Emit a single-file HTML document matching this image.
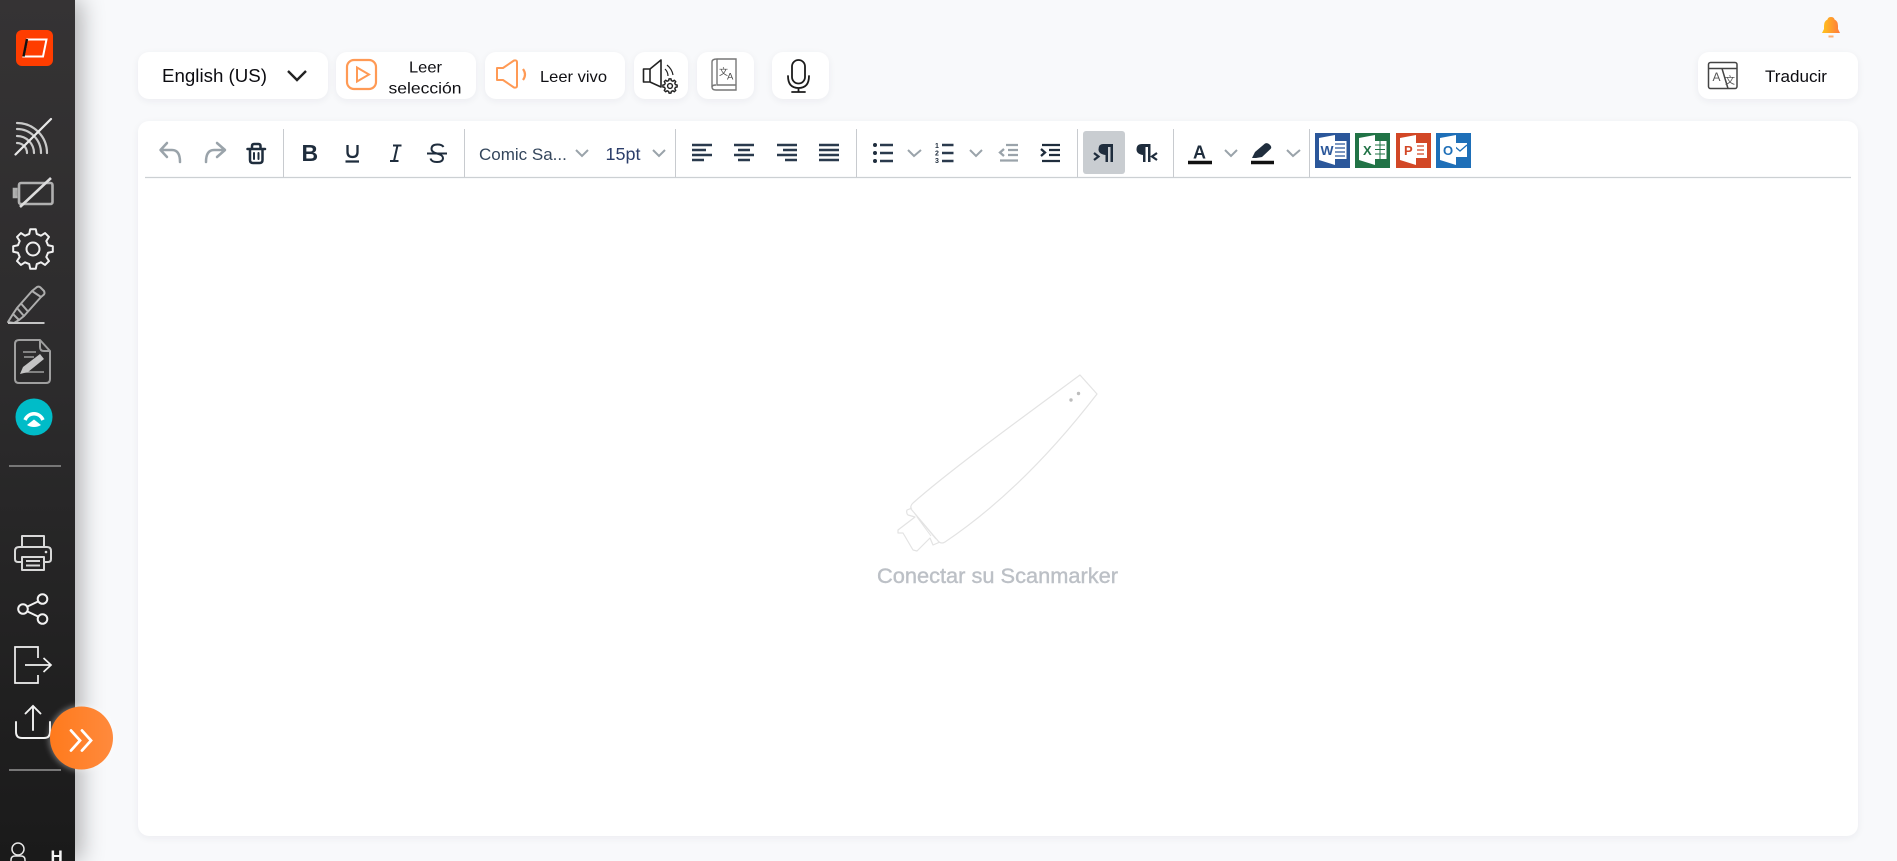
<!DOCTYPE html>
<html lang="es"><head><meta charset="utf-8"><title>Scanmarker</title>
<style>
html,body{margin:0;padding:0;width:1897px;height:861px;overflow:hidden;background:#f8f9fb;font-family:"Liberation Sans",sans-serif}
.side{position:absolute;left:0;top:0;width:75px;height:861px;background:linear-gradient(180deg,#353334 0%,#2c2b2c 45%,#1a1a1a 100%);box-shadow:6px 0 22px rgba(0,0,0,.3)}
.card{position:absolute;background:#fff;border-radius:11px;box-shadow:0 2px 8px rgba(30,40,70,.06)}
svg{position:absolute;left:0;top:0;overflow:visible}
text{font-family:"Liberation Sans",sans-serif}
</style></head><body>
<div class="side"></div>
<div class="card" style="left:138px;top:52px;width:190px;height:47px"></div>
<div class="card" style="left:336px;top:52px;width:140px;height:47px"></div>
<div class="card" style="left:485px;top:52px;width:140px;height:47px"></div>
<div class="card" style="left:634px;top:52px;width:54px;height:47px"></div>
<div class="card" style="left:697px;top:52px;width:57px;height:47px"></div>
<div class="card" style="left:772px;top:52px;width:57px;height:47px"></div>
<div class="card" style="left:1698px;top:52px;width:160px;height:47px"></div>
<div class="card" style="left:138px;top:121px;width:1720px;height:715px"></div>
<div style="position:absolute;left:1083px;top:131px;width:42px;height:43px;background:#c9cdd1;border-radius:3px"></div>
<svg width="1897" height="861" viewBox="0 0 1897 861" fill="none">
<defs><linearGradient id="bell" x1="0" x2="1"><stop offset="0" stop-color="#ffc41a"/><stop offset="1" stop-color="#ff7a3d"/></linearGradient>
<linearGradient id="orb" x1="0" x2="1"><stop offset="0" stop-color="#ff7a1c"/><stop offset="1" stop-color="#ff8a3d"/></linearGradient>
<filter id="glow" x="-30%" y="-30%" width="160%" height="160%"><feGaussianBlur stdDeviation="3"/></filter>
<path id="gear" stroke-linejoin="round" d="M-3.75-15.04-2.78-19.81 2.78-19.81 3.75-15.04 7.98-13.29 12.04-15.97 15.97-12.04 13.29-7.98 15.04-3.75 19.81-2.78 19.81 2.78 15.04 3.75 13.29 7.98 15.97 12.04 12.04 15.97 7.98 13.29 3.75 15.04 2.78 19.81-2.78 19.81-3.75 15.04-7.98 13.29-12.04 15.97-15.97 12.04-13.29 7.98-15.04 3.75-19.81 2.78-19.81-2.78-15.04-3.75-13.29-7.98-15.97-12.04-12.04-15.97-7.98-13.29Z"/></defs>
<!-- logo -->
<rect x="16" y="30" width="37" height="36" rx="6" fill="#ff3d00"/>
<path d="M27 39.500H46.500L43 56.500H23.500Z" stroke="#fff" stroke-width="2"/>
<path d="M27 39 23.500 56.500" stroke="#111" stroke-width="2.400"/>
<!-- wifi off -->
<g stroke="#c9c9c9" stroke-width="2.200" stroke-linecap="round">
<path d="M17 123A30 30 0 0 1 47 153"/><path d="M17 129A24 24 0 0 1 41 153"/><path d="M17 136A17 17 0 0 1 34 153"/><path d="M17 143A10 10 0 0 1 27 153"/>
<path d="M15.500 154.500 51 119" stroke="#e8e8e8"/></g>
<!-- battery -->
<g stroke="#b0b0b0" stroke-width="2.600"><rect x="19" y="183" width="33.500" height="21" rx="2"/><path d="M17.500 189H14V197H17.500" fill="#a5a5a5"/><path d="M20 207 51 178" stroke="#dcdcdc"/></g>
<!-- gear -->
<g stroke="#f0f0f0" stroke-width="2"><circle cx="33" cy="249" r="6.500"/><use href="#gear" transform="translate(33 249)"/></g>
<!-- highlighter -->
<g stroke="#adadad" stroke-width="2" stroke-linejoin="round"><path d="M32 291 17 308 24 316 41 297Z"/><path d="M32 291 37 287Q39 286 40.500 287.500L44 291Q45 293 44 294.500L41 297"/><path d="M21 303.500 28 311.500"/><path d="M17 308 13 314 19 320 24 316"/><path d="M13 314 8 322 14 323 19 320"/><path d="M8 323H44.500" stroke="#c4c4c4"/></g>
<!-- doc -->
<g stroke="#9f9f9f" stroke-width="2" stroke-linejoin="round"><path d="M19 340H40L50 351V379Q50 383 46 383H19Q15 383 15 379V344Q15 340 19 340Z"/><path d="M40 340V347Q40 351 44 351H50"/><path d="M23 352H36M24 357H34M24 372H44" stroke-width="1.500"/></g>
<path d="M20 374 23 367 40 354 44 359 28 372Z" fill="#c4c4c4"/>
<!-- teal -->
<circle cx="34" cy="417" r="18.500" fill="#00bcc8"/>
<path d="M25 420A10 11 0 0 1 43 420" stroke="#fff" stroke-width="3.500"/><path d="M27 425 34 419.500 41 425Q38 427 34 427Q30 427 27 425Z" fill="#fff"/>
<path d="M9 466H61M9 770H61" stroke="#777" stroke-width="2"/>
<!-- printer -->
<g stroke="#d8d8d8" stroke-width="2" stroke-linejoin="round"><path d="M22 547V536H44V547"/><path d="M22 562H18Q15 562 15 559V551Q15 547 19 547H47Q51 547 51 551V559Q51 562 48 562H44"/><rect x="22" y="557" width="22" height="13"/><path d="M26 561H40M26 565.500H40"/></g><circle cx="46" cy="552" r="1.300" fill="#ddd"/>
<!-- share -->
<g stroke="#f2f2f2" stroke-width="2"><circle cx="23" cy="609" r="4.800"/><circle cx="42.500" cy="599" r="4.800"/><circle cx="42.500" cy="619" r="4.800"/><path d="M27.500 606.500 38 601.500M27.500 611.500 38 616.500"/></g>
<!-- logout -->
<g stroke="#f2f2f2" stroke-width="1.700"><path d="M38 658V647H15V683H38V675"/><path d="M25 665H51M43.500 658 51 665 43.500 672"/></g>
<!-- upload -->
<g stroke="#f2f2f2" stroke-width="1.900" stroke-linecap="round"><path d="M33 707V730M25.500 713.500 33 706 40.500 713.500"/><path d="M16 722V732Q16 738 22 738H44Q50 738 50 732V722"/></g>
<!-- orb -->
<circle cx="81.500" cy="738" r="33" fill="#fff" opacity=".35" filter="url(#glow)"/>
<circle cx="81.500" cy="738" r="31.500" fill="url(#orb)"/>
<g stroke="#fff" stroke-width="2.800" stroke-linecap="round"><path d="M71 730.500 80 740.500 71 750.500M82 730.500 91 740.500 82 750.500"/></g>
<!-- user -->
<g stroke="#e6e6e6" stroke-width="1.500"><circle cx="18" cy="849" r="6"/><path d="M11 861V860Q11 856 15 856H21Q25 856 25 860V861"/></g>
<text x="50.500" y="862" font-size="17" font-weight="700" fill="#f5f5f5">H</text>
<!-- top labels -->
<text x="162" y="82" font-size="18" fill="#0b0b10" textLength="105" lengthAdjust="spacingAndGlyphs">English (US)</text>
<path d="M288 71 297 80 306 71" stroke="#222" stroke-width="2.400"/>
<g fill="#101014" font-size="16"><text x="409" y="72.500" textLength="33" lengthAdjust="spacingAndGlyphs">Leer</text><text x="388.500" y="93.500" textLength="73" lengthAdjust="spacingAndGlyphs">selección</text></g>
<rect x="347" y="60" width="29" height="29" rx="7" stroke="#ff9a55" stroke-width="2.200"/><path d="M357 67.500 369 74.500 357 81.500Z" stroke="#ff9a55" stroke-width="2"/>
<path d="M497 68H503L514 60.500Q517 60 517 62V86Q517 88 514 87.500L503 80H497Z" stroke="#ff9a55" stroke-width="2" stroke-linejoin="round"/><path d="M523 69Q527 74.500 523 80" stroke="#ff9a55" stroke-width="2.200"/>
<text x="540" y="82" font-size="16" fill="#101014" textLength="67" lengthAdjust="spacingAndGlyphs">Leer vivo</text>
<!-- speaker gear -->
<g stroke="#222" stroke-width="1.600" stroke-linejoin="round"><path d="M643.500 69H650L661 60V87L650 82H643.500Z"/><path d="M650 69V82"/><path d="M665 69Q668 72 668 76M667 65Q672 69 673 75" stroke-width="1.200"/><circle cx="670" cy="86" r="2.400" stroke-width="1.400"/><use href="#gear" transform="translate(670 86) scale(.36)" stroke-width="4"/></g>
<!-- book -->
<g stroke="#777" stroke-width="1.400"><path d="M736 59H717Q712 59 712 62V87Q712 90 716 90H736V59Z"/><path d="M717 59V85H736M712 87Q712 85 716 85"/></g>
<text x="719" y="75" font-size="9" fill="#444" font-family="Noto Sans CJK SC">文</text><text x="727" y="79.500" font-size="9.500" fill="#444">A</text>
<!-- mic -->
<g stroke="#1c1c1c" stroke-width="1.800" stroke-linecap="round"><rect x="792" y="60" width="13" height="23.500" rx="6.500"/><path d="M788 76Q788 88 798.500 88Q809 88 809 76M798.500 88V92M792 92H805"/></g>
<!-- translate -->
<g stroke="#444" stroke-width="1.500"><rect x="1708.500" y="62.500" width="28.500" height="26" rx="2"/><path d="M1708.500 68.500H1737M1722 68.500 1728 88.500"/></g>
<text x="1712.500" y="81" font-size="12" fill="#555">A</text><text x="1725" y="84" font-size="10" fill="#555" font-family="Noto Sans CJK SC">文</text>
<text x="1765" y="82" font-size="16.500" fill="#0b0b10" textLength="62" lengthAdjust="spacingAndGlyphs">Traducir</text>
<!-- bell -->
<path d="M1831 17Q1834 17 1834.500 19.500Q1838 21 1838 26V29L1840 33H1822L1824 29V26Q1824 21 1827.500 19.500Q1828 17 1831 17Z" fill="url(#bell)"/><path d="M1828.500 36.500H1833.500" stroke="#ffb070" stroke-width="2"/>
<!-- toolbar dividers -->
<path d="M145 177.500H1851" stroke="#ccd0d3" stroke-width="1.200"/>
<path d="M283.500 129V177M464.500 129V177M675.500 129V177M856.500 129V177M1077.500 129V177M1173.500 129V177M1309.500 129V177" stroke="#c8cbcf"/>
<!-- undo redo trash -->
<g stroke="#9aa3aa" stroke-width="2.500" stroke-linecap="round" stroke-linejoin="round"><path d="M167 143 160.500 150 167 157M161 150H172Q180 150 180 162"/><path d="M217 143 225 150 217 157M224 150H214Q206 150 206 162"/></g>
<g stroke="#1f2d3d" stroke-width="2.500" stroke-linejoin="round" stroke-linecap="round"><path d="M247.500 149H265M252 149V146Q252 144 254 144H258.500Q260.500 144 260.500 146V149M250 149V160Q250 163 253 163H259.500Q262.500 163 262.500 160V149"/><path d="M254 153V159M258.500 153V159" stroke-width="2"/></g>
<text x="301.500" y="161" font-size="23" font-weight="700" fill="#1f2d3d">B</text>
<g stroke="#1f2d3d" stroke-width="2.300"><path d="M347.500 145V152Q347.500 157 352.500 157Q357.500 157 357.500 152V145M345.500 161.500H359"/><path d="M393 145.500H401.500M390 161H398.500M397.500 145.500 394 161" stroke-width="2"/><path d="M427 153.500H447" stroke-width="2"/><path d="M443.500 147Q442 144.500 437.500 144.500Q431.500 144.500 431.500 149Q431.500 152 437 153.500Q443 155 443 158Q443 162 437 162Q431.500 162 430.500 158.500" stroke-width="2"/></g>
<text x="479" y="160" font-size="17" fill="#34465c">Comic Sa...</text>
<text x="605.500" y="160" font-size="17.500" fill="#2c3e6a" textLength="35" lengthAdjust="spacingAndGlyphs">15pt</text>
<g stroke="#9aa3aa" stroke-width="2"><path d="M576 150 582 156 588 150M653 150 659 156 665 150M908 150 914 156 921 150M970 150 976 156 982 150M1225 150 1231 156 1237 150M1287 150 1293 156 1300 150"/></g>
<!-- aligns -->
<g stroke="#2a3a4d" stroke-width="2.400"><path d="M692 145H712M692 150H706M692 155H712M692 160H704"/><path d="M734 145H754M738 150H750M734 155H754M738 160H750"/><path d="M777 145H797M783 150H797M777 155H797M785 160H797"/><path d="M819 145H839M819 150H839M819 155H839M819 160H839"/></g>
<!-- lists -->
<g stroke="#2a3a4d" stroke-width="2.400"><path d="M880 145H893M880 153H893M880 161H893M942 145H953.500M942 153H953.500M942 161H953.500"/></g>
<g fill="#1f2d3d"><circle cx="875" cy="145" r="2"/><circle cx="875" cy="153" r="2"/><circle cx="875" cy="161" r="2"/></g>
<g fill="#1f2d3d" font-size="7" font-weight="700"><text x="935" y="148">1</text><text x="935" y="155.500">2</text><text x="935" y="163">3</text></g>
<g stroke="#9aa3aa" stroke-width="2.300"><path d="M1006 145H1018M1008 150H1018M1008 155H1018M1000 160.500H1018"/><path d="M1004 149 1000 152.500 1004 156"/></g>
<g stroke="#1f2d3d" stroke-width="2.300"><path d="M1042 145H1060M1049 150H1060M1049 155H1060M1042 161H1060"/><path d="M1041 149 1045 152.500 1041 156"/></g>
<!-- ltr rtl -->
<g fill="#1f2d3d"><path d="M1103 144H1113V162H1110.500V147H1108V162H1105.500V155Q1098.500 154 1098.500 149.500Q1098.500 144 1103 144Z"/><path d="M1142 144H1150.500V162H1148V147H1145.500V162H1143V155Q1136.500 154 1136.500 149.500Q1136.500 144 1142 144Z"/></g>
<g stroke="#1f2d3d" stroke-width="2.200"><path d="M1094 153 1098.500 156.500 1094 160"/><path d="M1157 153 1152 156.500 1157 160"/></g>
<!-- color -->
<text x="1193" y="158.500" font-size="18" font-weight="700" fill="#1f2d3d">A</text>
<path d="M1188 162.500H1212M1251 162.500H1274" stroke="#111" stroke-width="3.600"/>
<path d="M1252 158 1255 152 1265 143.500Q1267 142.500 1269 144L1270.500 145.500Q1272 147.500 1270.500 149L1262 157 1256 158Z" fill="#1f2d3d"/>
<!-- office -->
<g>
<rect x="1315" y="133" width="35" height="35" fill="#2b579a"/><path d="M1333 141H1346.500V159H1333Z" fill="#fff"/><path d="M1335 144H1345M1335 148H1345M1335 152H1345M1335 156H1345" stroke="#2b579a" stroke-width="1.200"/><path d="M1319 138 1335 135V165L1319 160Z" fill="#fff"/><text x="1320.500" y="155" font-size="13" font-weight="700" fill="#2b579a" textLength="13" lengthAdjust="spacingAndGlyphs">W</text>
<rect x="1355" y="133" width="35" height="35" fill="#217346"/><path d="M1372 141H1386.500V159H1372Z" fill="#fff"/><path d="M1375 145H1385M1375 149.500H1385M1375 154H1385M1380 141V159" stroke="#217346"/><path d="M1359 138 1375 135V165L1359 160Z" fill="#fff"/><text x="1363" y="155" font-size="13" font-weight="700" fill="#217346">X</text>
<rect x="1396" y="133" width="35" height="35" fill="#d24726"/><path d="M1412 143H1427V158H1412Z" fill="#fff"/><path d="M1417 146H1424M1417 150H1424M1417 154H1424" stroke="#d24726" stroke-width="1.300"/><path d="M1400 138 1416 135V165L1400 160Z" fill="#fff"/><text x="1404" y="155" font-size="13" font-weight="700" fill="#d24726">P</text>
<rect x="1436" y="133" width="35" height="35" fill="#1e6fb8"/><path d="M1452 143H1467V157H1452Z" fill="#fff"/><path d="M1453 145 1460 151 1467 145" stroke="#1e6fb8" stroke-width="1.300"/><path d="M1440 138 1456 135V165L1440 160Z" fill="#fff"/><text x="1443" y="155" font-size="13" font-weight="700" fill="#1e6fb8">O</text>
</g>
<!-- pen -->
<g stroke="#e3e3e3" stroke-width="1.200" stroke-linejoin="round"><path d="M1080 375 1097 394C1050 455 1000 505 945 542Q942 544 939 542L911 509Q910 506 913 503C950 470 1030 412 1080 375Z"/><path d="M912 508 907 510Q906 513 908 515L915 517 898 530V533H903L913 550 917 551 930 538 933 545 940 542"/><path d="M915 514 936 539M917 517 931 536" stroke-width="1"/></g>
<circle cx="1071" cy="400" r="1.700" fill="#bdbdbd"/><circle cx="1078.500" cy="393.500" r="1.700" fill="#bdbdbd"/>
<text x="877" y="583" font-size="21" font-weight="400" fill="#bcc0c6" textLength="241" lengthAdjust="spacingAndGlyphs" stroke="#bcc0c6" stroke-width=".4">Conectar su Scanmarker</text>
</svg>
</body></html>
